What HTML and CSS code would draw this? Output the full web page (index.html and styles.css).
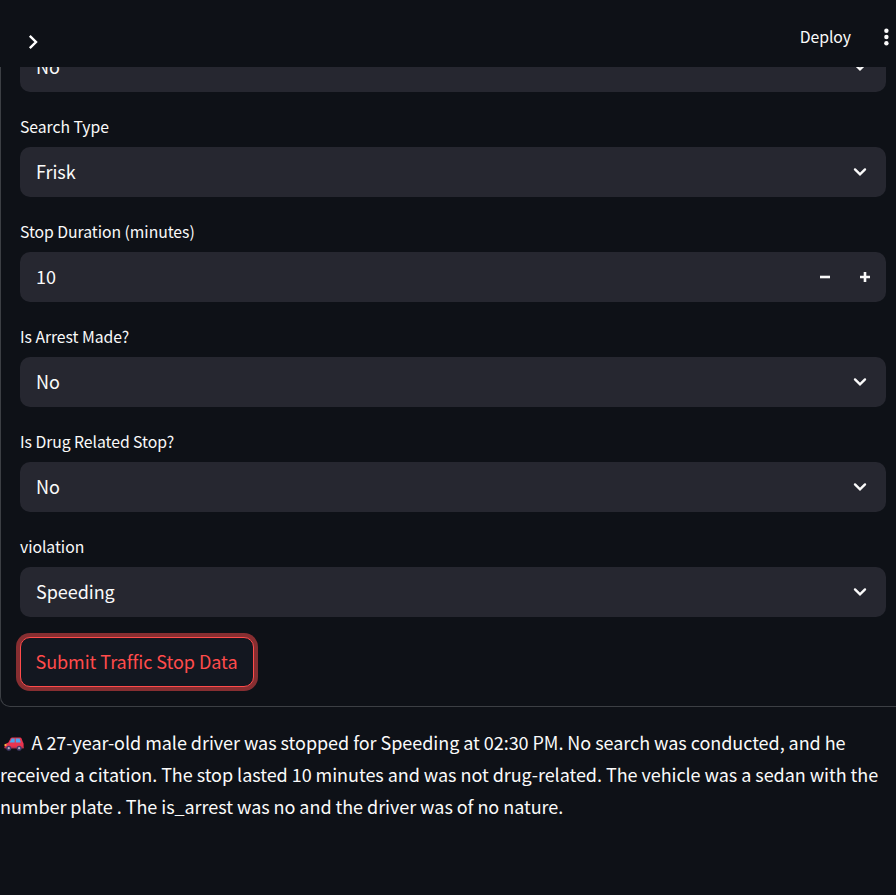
FILE: index.html
```html
<!DOCTYPE html>
<html lang="en">
<head>
<meta charset="utf-8">
<title>Traffic Stop</title>
<link rel="stylesheet" href="styles.css">
</head>
<body>
<header class="toolbar">
  <svg class="expand" width="12" height="16" viewBox="0 0 12 16"><path d="M1.8 1.8 8 8l-6.2 6.2"/></svg>
  <span class="deploy">Deploy</span>
  <svg class="menu" width="6" height="18" viewBox="0 0 6 18"><circle cx="3.4" cy="2.8" r="2.2"/><circle cx="3.4" cy="9" r="2.2"/><circle cx="3.4" cy="15.2" r="2.2"/></svg>
</header>
<main class="content">
  <form class="form">
    <div class="control"><span>No</span><svg class="chevron" width="14" height="10" viewBox="0 0 14 10"><path d="M2 2.4 7 7.4l5-5"/></svg></div>
    <label class="label">Search Type</label>
    <div class="control"><span>Frisk</span><svg class="chevron" width="14" height="10" viewBox="0 0 14 10"><path d="M2 2.4 7 7.4l5-5"/></svg></div>
    <label class="label">Stop Duration (minutes)</label>
    <div class="control"><span>10</span>
      <div class="steps">
        <svg width="10" height="10" viewBox="0 0 10 10"><path d="M0 5h10"/></svg>
        <svg width="10" height="10" viewBox="0 0 10 10"><path d="M0 5h10M5 0v10"/></svg>
      </div>
    </div>
    <label class="label">Is Arrest Made?</label>
    <div class="control"><span>No</span><svg class="chevron" width="14" height="10" viewBox="0 0 14 10"><path d="M2 2.4 7 7.4l5-5"/></svg></div>
    <label class="label">Is Drug Related Stop?</label>
    <div class="control"><span>No</span><svg class="chevron" width="14" height="10" viewBox="0 0 14 10"><path d="M2 2.4 7 7.4l5-5"/></svg></div>
    <label class="label">violation</label>
    <div class="control"><span>Speeding</span><svg class="chevron" width="14" height="10" viewBox="0 0 14 10"><path d="M2 2.4 7 7.4l5-5"/></svg></div>
    <button class="submit" type="button">Submit Traffic Stop Data</button>
  </form>
  <p class="summary">
    <span class="line"><svg class="car" width="20" height="14" viewBox="0 0 21 15"><path fill="#e8344f" d="M1 7.5 4.5 6 7 1.2Q7.4.5 8.5.5H17q1.2 0 1.6 1l1.5 4.2q.7.6.7 2V12H.5V9q0-1 .5-1.5Z"/><path fill="#49a5ee" d="M5.8 6 8 1.7h3.2V6ZM12.4 1.7h4.1L17.8 6h-5.4Z"/><path fill="#f9c23c" d="M.4 7.6h2v2h-2z"/><path fill="#b9314f" d="M.4 10.5h20.4V12H.4z"/><g fill="#433b6b"><circle cx="4.9" cy="12" r="2.7"/><circle cx="16" cy="12" r="2.7"/></g><g fill="#b4acbc"><circle cx="4.9" cy="12" r="1.2"/><circle cx="16" cy="12" r="1.2"/></g></svg>A 27-year-old male driver was stopped for Speeding at 02:30 PM. No search was conducted, and he</span>
    <span class="line">received a citation. The stop lasted 10 minutes and was not drug-related. The vehicle was a sedan with the</span>
    <span class="line">number plate . The is_arrest was no and the driver was of no nature.</span>
  </p>
</main>
</body>
</html>
```
FILE: styles.css
```css
* { box-sizing: border-box; }
body {
  margin: 0;
  height: 895px;
  overflow: hidden;
  background: #0e1117;
  color: #fafafa;
  font: 18px/32px "Noto Sans CJK SC", "Noto Sans", sans-serif;
  letter-spacing: -0.045px;
}
svg { display: block; flex: none; }
.toolbar {
  display: flex;
  align-items: center;
  height: 67px;
  padding: 8px 8px 0 28px;
}
.expand { margin-top: 9px; fill: none; stroke: #fff; stroke-width: 2.4; }
.deploy { margin: 0 31.5px 2px auto; font-size: 15.8px; white-space: nowrap; }
.menu { margin: 0 -0.5px 1px 0; fill: #fafafa; }
.content { height: 828px; overflow: hidden; }
.form {
  width: 906px;
  height: 665px;
  margin-top: -25px;
  padding: 0 19px;
  border: solid #3c3f44;
  border-width: 0 1px 1px;
  border-radius: 0 0 10px 10px;
}
.control {
  display: flex;
  align-items: center;
  justify-content: space-between;
  height: 50px;
  padding: 0 19px 0 16px;
  border-radius: 10px;
  background: #262730;
}
.control > span { margin-bottom: 2px; }
.chevron { fill: none; stroke: #fafafa; stroke-width: 2.4; stroke-linecap: round; }
.steps { display: flex; gap: 30px; margin-right: -3px; }
.steps svg { stroke: #fafafa; stroke-width: 2.6; }
.label {
  display: block;
  height: 55px;
  padding-top: 22px;
  font-size: 15.75px;
  line-height: 26px;
}
.submit {
  display: block;
  width: 234px;
  height: 50px;
  margin-top: 20px;
  padding: 0 1px 2px 0;
  border: 1px solid #ff4b4b;
  border-radius: 10px;
  background: #131720;
  box-shadow: 0 0 0 4px rgba(255, 75, 75, 0.5);
  color: #ff4b4b;
  font: inherit;
  letter-spacing: inherit;
}
.summary { margin: 19px 0 0; }
.line { display: flex; align-items: center; height: 32px; white-space: nowrap; }
.car { margin: 4px 7.5px 0 4px; }
```
